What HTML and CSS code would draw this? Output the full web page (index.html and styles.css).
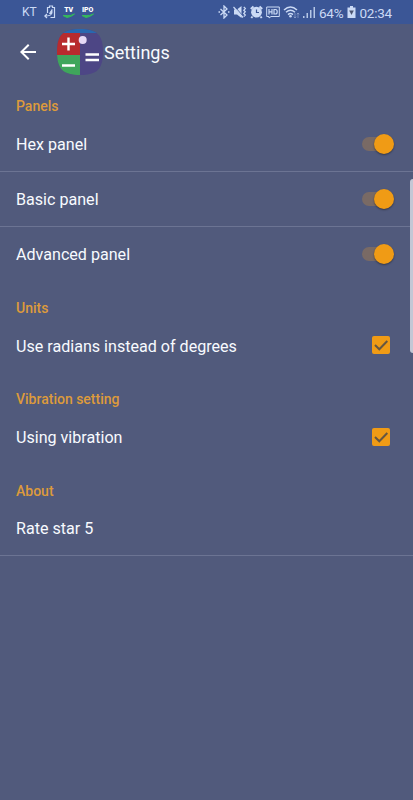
FILE: index.html
```html
<!DOCTYPE html>
<html lang="en">
<head>
    <meta charset="UTF-8">
    <meta name="viewport" content="width=device-width, initial-scale=1">
    <title>Settings</title>
    <link rel="stylesheet" href="styles.css">
</head>
<body>
    <div class="status-bar">
        <div class="status-left">
            <span class="carrier">KT</span>
            <svg width="12" height="14" viewBox="0 0 12 14" fill="none" stroke="currentColor">
                <path d="M3.500 8V2.500H5.500V1H8.500V2.500H10.500V12.500H6.500" stroke-width="1.200"/>
                <path d="M8 4.500v4H5.500z" fill="currentColor"/>
                <path d="M7.500 8.500C7 11 4 11 1 11M3 9L.8 11L3 13" stroke-width="1.200"/>
            </svg>
            <span class="badge">TV<svg class="tick" width="12" height="6" viewBox="0 0 12 6"><path d="M0 2.500l4 2q4-.5 7.500-3.500-4 2-7 1.500z" fill="#35b85c" stroke="#35b85c" stroke-width="1"/></svg></span>
            <span class="badge">IPO<svg class="tick" width="12" height="6" viewBox="0 0 12 6"><path d="M0 2.500l4 2q4-.5 7.500-3.500-4 2-7 1.500z" fill="#35b85c" stroke="#35b85c" stroke-width="1"/></svg></span>
        </div>
        <div class="status-right">
            <svg width="12" height="14" viewBox="0 0 12 14" fill="none" stroke="currentColor" stroke-width="1.300">
                <path d="M2.500 4l6.500 6-3 3V1l3 3-6.500 6"/>
                <path d="M.5 7h1.500M10 7h1.500"/>
            </svg>
            <svg width="14" height="14" viewBox="0 0 14 14" fill="none" stroke="currentColor">
                <path d="M1 4.500h3L8.500 1v12L4 9.500H1z" fill="currentColor" stroke="none"/>
                <path d="M10.800 2l1.500 1.600-1.500 1.600 1.500 1.600-1.500 1.600 1.500 1.600-1.500 1.600" stroke-width="1.300"/>
                <path d="M1.500 1.500l8 9" stroke="#3b5696" stroke-width="1"/>
                <path d="M.5 2l9.500 10.500" stroke-width="1.200"/>
            </svg>
            <svg width="13" height="14" viewBox="0 0 13 14" fill="none" stroke="currentColor">
                <circle cx="6.500" cy="7.200" r="5.400" fill="currentColor" stroke="none"/>
                <path d="M.8 4L3.500 1.500M12.200 4L9.500 1.500M2.500 11.500L1.300 13M10.500 11.500l1.200 1.500" stroke-width="2"/>
                <path d="M6.500 4.500v3h2.500" stroke="#3b5696" stroke-width="1.200"/>
            </svg>
            <svg width="14" height="14" viewBox="0 0 14 14" fill="none" stroke="currentColor">
                <path d="M.7 2h12.600v9.500H5L3 13v-1.500H.7z" stroke-width="1"/>
                <path d="M3 4v5.500M6 4v5.500M3 6.800H6M8 4.500h1.500q1.700 0 1.700 2.250t-1.700 2.250H8z" stroke-width="1.200"/>
            </svg>
            <svg width="17" height="14" viewBox="0 0 17 14" fill="none" stroke="currentColor">
                <path d="M1 5Q7.500-1 14 5M3 7.300q4.500-4 9 0M5 9.600q2.500-2.200 5 0" stroke-width="1.500"/>
                <circle cx="7.500" cy="11.300" r="1.300" fill="currentColor" stroke="none"/>
                <path d="M12 8v5M10.800 11.600L12 13l1.200-1.400M15 13V8M13.800 9.400L15 8l1.200 1.400" opacity=".45" stroke-width=".9"/>
            </svg>
            <svg width="13" height="14" viewBox="0 0 13 14" fill="currentColor">
                <path d="M0 11h1.500v2H0zM3.500 8H5v5H3.500zM7 5h1.500v8H7zM10.500 2H12v11h-1.500z" opacity=".85"/>
            </svg>
            <span class="percent">64%</span>
            <svg class="battery" width="9" height="14" viewBox="0 0 9 14">
                <path d="M3 1h3v1.500h2.500v10.500h-8V2.500H3z" fill="currentColor"/>
                <path d="M2.200 5.500h4.600L4.500 10z" fill="#4c5470"/>
            </svg>
            <span class="clock">02:34</span>
        </div>
    </div>

    <div class="app-bar">
        <svg class="back" width="24" height="24" viewBox="0 0 24 24" fill="#fff">
            <path d="M20 11H7.830l5.590-5.590L12 4l-8 8 8 8 1.410-1.410L7.830 13H20v-2z"/>
        </svg>
        <svg class="logo" width="46" height="46" viewBox="0 0 46 46">
            <defs>
                <clipPath id="logoShape">
                    <path d="M23 0C40 0 46 6 46 23S40 46 23 46 0 40 0 23 6 0 23 0z"/>
                </clipPath>
            </defs>
            <g clip-path="url(#logoShape)">
                <path d="M0 0h46v46H0z" fill="#4d4685"/>
                <path d="M0 0h46v4H0z" fill="#2868b0"/>
                <path d="M0 4h23v22H0z" fill="#b82b2e"/>
                <path d="M0 26h23v20H0z" fill="#3fa65b"/>
            </g>
            <path d="M5 15h13M11.500 8.500v13M5 36.500h13M28.500 25.500h13.500M28.500 31h13.500" stroke="#fff" stroke-width="2.400"/>
            <circle cx="25.700" cy="11" r="4" fill="#e5d9f6"/>
        </svg>
        <h1 class="title">Settings</h1>
    </div>

    <div class="settings">
        <h2 class="section-title">Panels</h2>
        <div class="row divider">
            <span class="label">Hex panel</span>
            <span class="switch"><span class="thumb"></span></span>
        </div>
        <div class="row divider">
            <span class="label">Basic panel</span>
            <span class="switch"><span class="thumb"></span></span>
        </div>
        <div class="row">
            <span class="label">Advanced panel</span>
            <span class="switch"><span class="thumb"></span></span>
        </div>

        <h2 class="section-title">Units</h2>
        <div class="row">
            <span class="label">Use radians instead of degrees</span>
            <span class="checkbox"><svg width="18" height="18" viewBox="0 0 18 18"><path d="M3 9l4.300 4.300L15.300 5" fill="none" stroke="#655642" stroke-width="2"/></svg></span>
        </div>

        <h2 class="section-title">Vibration setting</h2>
        <div class="row">
            <span class="label">Using vibration</span>
            <span class="checkbox"><svg width="18" height="18" viewBox="0 0 18 18"><path d="M3 9l4.300 4.300L15.300 5" fill="none" stroke="#655642" stroke-width="2"/></svg></span>
        </div>

        <h2 class="section-title">About</h2>
        <div class="row divider">
            <span class="label">Rate star 5</span>
        </div>
    </div>

    <div class="edge-handle"></div>
</body>
</html>
```
FILE: styles.css
```css
:root {
    --background-color: #515a7c;
    --status-color: #3b5696;
    --accent-color: #f09b15;
    --heading-color: #dd9a3b;
    --text-color: #f8faff;
}

* {
    box-sizing: border-box;
}

body {
    margin: 0;
    min-height: 100vh;
    font-family: Roboto, sans-serif;
    background-color: var(--background-color);
    color: var(--text-color);
    position: relative;
    overflow: hidden;
}

.status-bar {
    height: 24px;
    padding: 0 21px 0 22px;
    display: flex;
    justify-content: space-between;
    align-items: center;
    background-color: var(--status-color);
    color: #cbdaf5;
    font-size: 12px;
    white-space: nowrap;
}

.status-left,
.status-right {
    display: flex;
    align-items: center;
}

.status-left {
    gap: 7px;
}

.status-right {
    gap: 3px;
}

.badge {
    width: 12px;
    height: 12px;
    display: flex;
    flex-direction: column;
    align-items: center;
    font-size: 7px;
    font-weight: 900;
    line-height: 8px;
    color: #fff;
}

.tick {
    flex: none;
    margin-top: -1px;
}

.percent,
.clock {
    font-size: 13.5px;
    line-height: 24px;
    letter-spacing: -0.2px;
    padding-top: 1px;
}

.battery {
    margin-left: 1px;
}

.app-bar {
    height: 56px;
    padding-left: 16px;
    display: flex;
    align-items: center;
}

.logo {
    margin-left: 17px;
}

.title {
    margin: 0 0 0 1px;
    font-size: 18px;
    font-weight: 400;
}

.section-title {
    margin: 0;
    height: 36.5px;
    padding: 17px 16px 0;
    font-size: 14px;
    font-weight: 500;
    line-height: 18px;
    color: var(--heading-color);
}

.row {
    height: 55px;
    padding: 0 16px;
    display: flex;
    justify-content: space-between;
    align-items: center;
    font-size: 16.1px;
    line-height: 20px;
}

.divider {
    border-bottom: 1px solid #6c7493;
}

.label {
    padding-top: 2px;
}

.switch {
    width: 29px;
    height: 14px;
    margin-right: 6px;
    border-radius: 7px;
    background-color: #796a65;
    display: flex;
    justify-content: flex-end;
    align-items: center;
}

.thumb {
    flex: none;
    width: 20px;
    height: 20px;
    margin-right: -3px;
    border-radius: 50%;
    background-color: var(--accent-color);
    box-shadow: 0 1px 2px rgba(0, 0, 0, 0.4);
}

.checkbox {
    width: 18px;
    height: 18px;
    margin: -1px 7px 0 0;
    border-radius: 2px;
    background-color: var(--accent-color);
}

.checkbox svg {
    display: block;
}

/* edge panel handle floats over the list */
.edge-handle {
    position: absolute;
    top: 179px;
    right: 0;
    width: 3px;
    height: 174px;
    border-radius: 3px 0 0 3px;
    background-color: #c3c7d5;
}
```
